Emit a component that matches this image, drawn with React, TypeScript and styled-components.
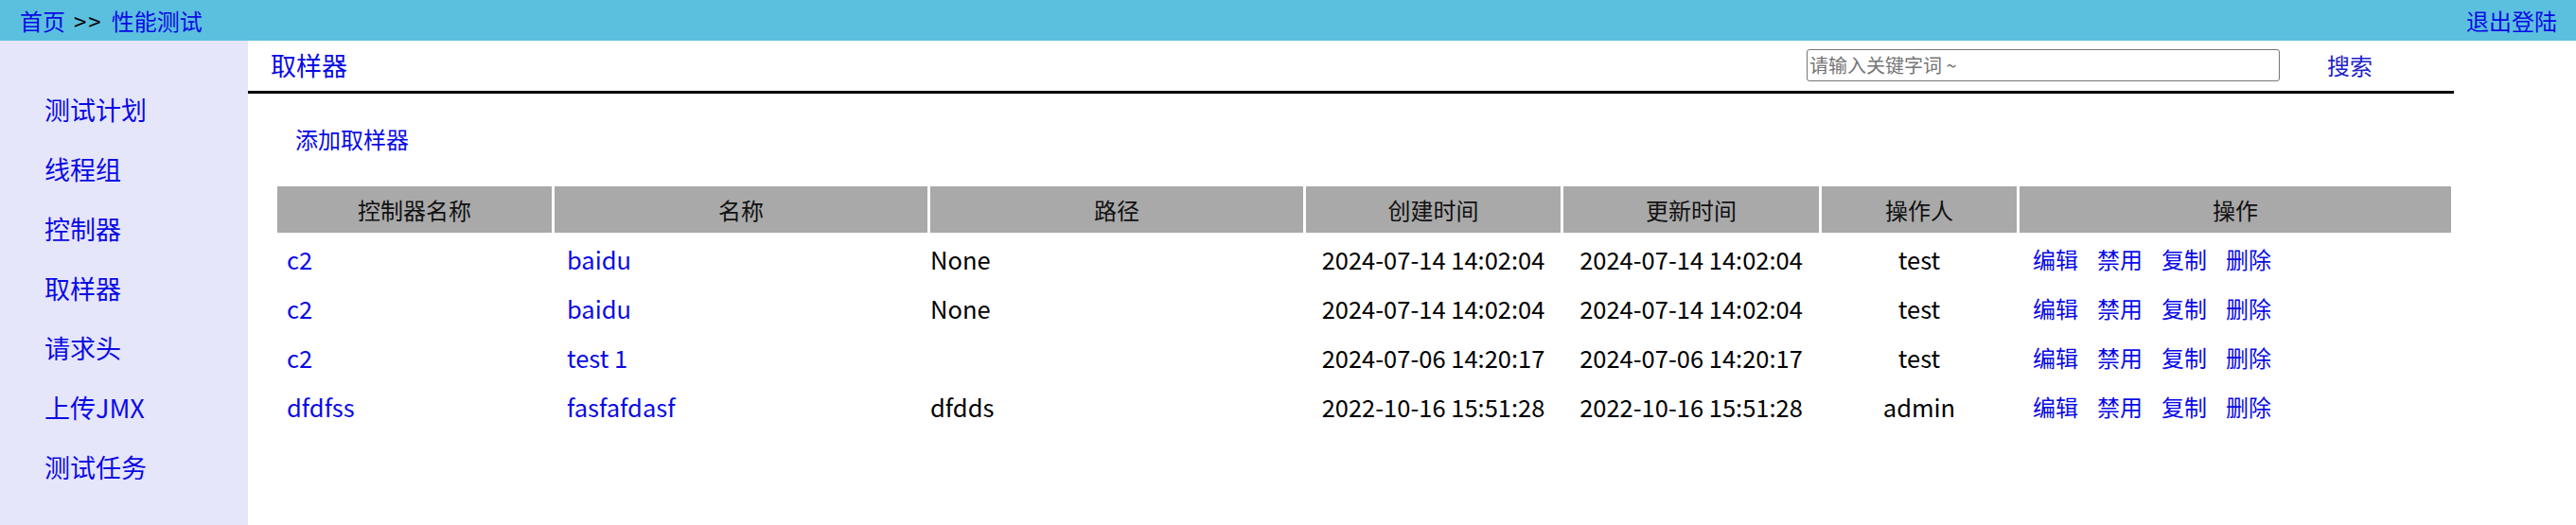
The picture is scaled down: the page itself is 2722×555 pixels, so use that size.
import React from "react";
import styled, { createGlobalStyle } from "styled-components";

const GlobalStyle = createGlobalStyle`
  html, body { margin: 0; padding: 0; background: #ffffff; }
  body { font-family: "Noto Sans CJK SC", "Noto Sans", sans-serif; }
  * { box-sizing: border-box; }
`;

const FONT = `"Noto Sans CJK SC", "Noto Sans", sans-serif`;
const BLUE = "#0a0ae6";

const Page = styled.div`
  width: 2722px;
  height: 555px;
  display: flex;
  flex-direction: column;
  font-family: ${FONT};
  overflow: hidden;
`;

const TopBar = styled.header`
  height: 43px;
  flex: 0 0 43px;
  background: #5bc0de;
  display: flex;
  align-items: center;
  justify-content: space-between;
  padding: 0 20px 0 21px;
  font-size: 24px;
  line-height: 1;
`;

const Crumbs = styled.div`
  display: flex;
  align-items: center;
  gap: 9px;
`;

const Link = styled.a`
  color: ${BLUE};
  text-decoration: none;
  cursor: pointer;
`;

const Sep = styled.span`
  color: #000;
  font-size: 24px;
  letter-spacing: 2px;
`;

const Body = styled.div`
  flex: 1;
  display: flex;
`;

const Sidebar = styled.nav`
  width: 262px;
  flex: 0 0 262px;
  background: #e6e6fa;
  padding-top: 41px;
  display: flex;
  flex-direction: column;
`;

const NavItem = styled.a`
  display: block;
  height: 63px;
  line-height: 63px;
  padding-left: 47px;
  font-size: 27px;
  color: ${BLUE};
  text-decoration: none;
`;

const Main = styled.main`
  width: 2331px;
  display: flex;
  flex-direction: column;
`;

const TitleBar = styled.div`
  height: 56px;
  border-bottom: 3px solid #000;
  display: flex;
  align-items: center;
  padding: 0 0 2px 24px;
`;

const Title = styled.span`
  font-size: 27px;
  color: ${BLUE};
  flex: 1;
`;

const SearchInput = styled.input`
  width: 500px;
  height: 34px;
  border: 1px solid #767676;
  border-radius: 3px;
  padding: 0 2px;
  font-family: ${FONT};
  font-size: 20px;
  color: #000;
  outline: none;
  &::placeholder { color: #757575; }
`;

const SearchButton = styled.a`
  margin-left: 50px;
  margin-right: 86px;
  font-size: 24px;
  color: #2222c8;
  text-decoration: none;
  cursor: pointer;
`;

const Content = styled.div`
  padding: 34px 0 0 28px;
  display: flex;
  flex-direction: column;
`;

const AddLink = styled.a`
  font-size: 24px;
  color: ${BLUE};
  text-decoration: none;
  margin-left: 22px;
  height: 28px;
  line-height: 28px;
  margin-bottom: 33px;
`;

const Table = styled.table`
  width: 2303px;
  table-layout: fixed;
  border-collapse: separate;
  border-spacing: 3px;
  font-size: 24px;
`;

const HeadCell = styled.th`
  height: 49px;
  background: #a9a9a9;
  color: #111;
  font-weight: normal;
  text-align: center;
  vertical-align: middle;
  padding: 0;
`;

type Align = "left" | "center";

const Cell = styled.td<{ $align: Align; $pad: number; $link?: boolean }>`
  height: 49px;
  padding: 0 0 0 ${(p) => p.$pad}px;
  font-size: 25.5px;
  text-align: ${(p) => p.$align};
  vertical-align: middle;
  color: ${(p) => (p.$link ? BLUE : "#000")};
  white-space: nowrap;
`;

const Actions = styled.div`
  display: flex;
  gap: 20px;
  font-size: 24px;
`;

const cols = [290, 394, 394, 269, 270, 206, 456];
const heads = ["控制器名称", "名称", "路径", "创建时间", "更新时间", "操作人", "操作"];

const rows = [
  ["c2", "baidu", "None", "2024-07-14 14:02:04", "2024-07-14 14:02:04", "test"],
  ["c2", "baidu", "None", "2024-07-14 14:02:04", "2024-07-14 14:02:04", "test"],
  ["c2", "test 1", "", "2024-07-06 14:20:17", "2024-07-06 14:20:17", "test"],
  ["dfdfss", "fasfafdasf", "dfdds", "2022-10-16 15:51:28", "2022-10-16 15:51:28", "admin"],
];

const nav = ["测试计划", "线程组", "控制器", "取样器", "请求头", "上传JMX", "测试任务"];

export default function App() {
  return (
    <Page>
      <GlobalStyle />
      <TopBar>
        <Crumbs>
          <Link>首页</Link>
          <Sep>&gt;&gt;</Sep>
          <Link>性能测试</Link>
        </Crumbs>
        <Link>退出登陆</Link>
      </TopBar>
      <Body>
        <Sidebar>
          {nav.map((n) => (
            <NavItem key={n}>{n}</NavItem>
          ))}
        </Sidebar>
        <Main>
          <TitleBar>
            <Title>取样器</Title>
            <SearchInput placeholder="请输入关键字词 ~" />
            <SearchButton>搜索</SearchButton>
          </TitleBar>
          <Content>
            <AddLink>添加取样器</AddLink>
            <Table>
              <colgroup>
                {cols.map((w, i) => (
                  <col key={i} style={{ width: w }} />
                ))}
              </colgroup>
              <thead>
                <tr>
                  {heads.map((h) => (
                    <HeadCell key={h}>{h}</HeadCell>
                  ))}
                </tr>
              </thead>
              <tbody>
                {rows.map((r, i) => (
                  <tr key={i}>
                    <Cell $align="left" $pad={10} $link>{r[0]}</Cell>
                    <Cell $align="left" $pad={13} $link>{r[1]}</Cell>
                    <Cell $align="left" $pad={0}>{r[2]}</Cell>
                    <Cell $align="center" $pad={0}>{r[3]}</Cell>
                    <Cell $align="center" $pad={0}>{r[4]}</Cell>
                    <Cell $align="center" $pad={0}>{r[5]}</Cell>
                    <Cell $align="left" $pad={14} $link>
                      <Actions>
                        <Link>编辑</Link>
                        <Link>禁用</Link>
                        <Link>复制</Link>
                        <Link>删除</Link>
                      </Actions>
                    </Cell>
                  </tr>
                ))}
              </tbody>
            </Table>
          </Content>
        </Main>
      </Body>
    </Page>
  );
}
